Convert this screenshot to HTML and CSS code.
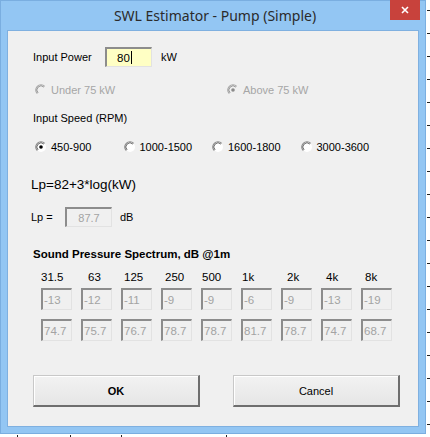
FILE: index.html
```html
<!DOCTYPE html>
<html>
<head>
<meta charset="utf-8">
<link rel="stylesheet" href="styles.css">
</head>
<body>
<svg class="defs" width="0" height="0" aria-hidden="true">
  <defs>
    <symbol id="radio" viewBox="0 0 12 12">
      <circle cx="6" cy="6" r="5" fill="#ffffff"/>
      <path d="M2.3 9.7 A5.2 5.2 0 0 1 9.7 2.3" fill="none" stroke="#8a8a8a" stroke-width="1.2"/>
      <path d="M3.1 8.9 A4.1 4.1 0 0 1 8.9 3.1" fill="none" stroke="#5a5a5a" stroke-width="0.9"/>
    </symbol>
    <symbol id="radio-off" viewBox="0 0 12 12">
      <circle cx="6" cy="6" r="5" fill="#f0f0f0"/>
      <path d="M2.3 9.7 A5.2 5.2 0 0 1 9.7 2.3" fill="none" stroke="#a8a8a8" stroke-width="1.2"/>
      <path d="M3.1 8.9 A4.1 4.1 0 0 1 8.9 3.1" fill="none" stroke="#8a8a8a" stroke-width="0.9"/>
    </symbol>
  </defs>
</svg>
<div class="window">
  <div class="titlebar">
    <span class="tb-side"></span>
    <div class="title">SWL Estimator - Pump (Simple)</div>
    <div class="tb-side tb-right">
      <div class="close">
        <svg width="8" height="8" viewBox="0 0 8 8"><path d="M1 1 L7 7 M7 1 L1 7" stroke="#ffffff" stroke-width="1.6"/></svg>
      </div>
    </div>
  </div>
  <div class="client">
    <div class="row power">
      <span class="power-label">Input Power</span>
      <div class="box box-yellow"><span>80</span><i class="caret"></i></div>
      <span class="unit">kW</span>
    </div>

    <div class="row sizes">
      <div class="opt opt-wide disabled">
        <svg class="radio"><use href="#radio-off"/></svg><span>Under 75 kW</span>
      </div>
      <div class="opt disabled">
        <svg class="radio"><use href="#radio-off"/><circle cx="6" cy="6" r="1.8" fill="#8a8a8a"/></svg><span>Above 75 kW</span>
      </div>
    </div>

    <div class="row caption">Input Speed (RPM)</div>

    <div class="row speeds">
      <div class="opt">
        <svg class="radio"><use href="#radio"/><circle cx="6" cy="6" r="1.8" fill="#000000"/></svg><span>450-900</span>
      </div>
      <div class="opt">
        <svg class="radio"><use href="#radio"/></svg><span>1000-1500</span>
      </div>
      <div class="opt">
        <svg class="radio"><use href="#radio"/></svg><span>1600-1800</span>
      </div>
      <div class="opt">
        <svg class="radio"><use href="#radio"/></svg><span>3000-3600</span>
      </div>
    </div>

    <div class="formula">Lp=82+3*log(kW)</div>

    <div class="row lp">
      <span class="lp-label">Lp =</span>
      <div class="box box-center">87.7</div>
      <span class="unit unit-db">dB</span>
    </div>

    <div class="heading">Sound Pressure Spectrum, dB @1m</div>

    <div class="spectrum">
      <span class="freq">31.5</span>
      <span class="freq">63</span>
      <span class="freq">125</span>
      <span class="freq">250</span>
      <span class="freq">500</span>
      <span class="freq">1k</span>
      <span class="freq">2k</span>
      <span class="freq">4k</span>
      <span class="freq">8k</span>

      <div class="box sbox">-13</div>
      <div class="box sbox">-12</div>
      <div class="box sbox">-11</div>
      <div class="box sbox">-9</div>
      <div class="box sbox">-9</div>
      <div class="box sbox">-6</div>
      <div class="box sbox">-9</div>
      <div class="box sbox">-13</div>
      <div class="box sbox">-19</div>

      <div class="box sbox lower">74.7</div>
      <div class="box sbox lower">75.7</div>
      <div class="box sbox lower">76.7</div>
      <div class="box sbox lower">78.7</div>
      <div class="box sbox lower">78.7</div>
      <div class="box sbox lower">81.7</div>
      <div class="box sbox lower">78.7</div>
      <div class="box sbox lower">74.7</div>
      <div class="box sbox lower">68.7</div>
    </div>

    <div class="buttons">
      <button class="btn btn-default">OK</button>
      <button class="btn">Cancel</button>
    </div>
  </div>
</div>
</body>
</html>
```

FILE: styles.css
```css
html, body {
  margin: 0;
  padding: 0;
}

html {
  background-color: #ffffff;
  background-image:
    repeating-linear-gradient(to bottom, transparent 0 10px, #222222 10px 11px, transparent 11px 23px),
    linear-gradient(to right, transparent 0 17px, #222222 17px 18px, transparent 18px 70px, #222222 70px 71px, transparent 71px 121px, #222222 121px 122px, transparent 122px 226px, #222222 226px 227px, transparent 227px);
  background-size: 3px 100%, 100% 2px;
  background-position: right top, left bottom;
  background-repeat: no-repeat;
}

body {
  width: 430px;
  height: 437px;
  overflow: hidden;
  font-family: "Liberation Sans", Arial, sans-serif;
  font-size: 11px;
  color: #000000;
}

.defs {
  position: absolute;
  width: 0;
  height: 0;
}

.window {
  box-sizing: border-box;
  width: 426px;
  height: 434px;
  background: #93c6f3;
  border: 1px solid #7aaee0;
  display: flex;
  flex-direction: column;
}

.titlebar {
  height: 30px;
  display: grid;
  grid-template-columns: 1fr auto 1fr;
  align-items: start;
}

.title {
  font-family: "Noto Sans", "Open Sans", sans-serif;
  font-size: 14px;
  line-height: 30px;
  color: #2b2b2b;
  padding-left: 4px;
}

.tb-right {
  display: flex;
  justify-content: flex-end;
}

.close {
  width: 30px;
  height: 20px;
  margin-top: -1px;
  margin-right: 5px;
  background: #c8423c;
  display: flex;
  align-items: center;
  justify-content: center;
}

.close svg {
  display: block;
}

.client {
  box-sizing: border-box;
  width: 410px;
  height: 395px;
  margin-left: 7px;
  background: #f0f0f0;
  box-shadow: 0 0 0 1px #7fb0e0;
  padding: 16px 0 0 25px;
  display: flex;
  flex-direction: column;
}

.row {
  display: flex;
  align-items: center;
}

.power {
  height: 20px;
}

.power-label {
  width: 72px;
}

.box {
  box-sizing: border-box;
  border-style: solid;
  border-width: 2px 1px 1px 2px;
  border-color: #8c8c8c #e2e2e2 #e2e2e2 #8c8c8c;
  background: #f0f0f0;
  color: #a3a3a3;
  display: flex;
  align-items: center;
}

.box-yellow {
  width: 47px;
  height: 20px;
  background: #ffffc4;
  color: #000000;
  padding-left: 10px;
  font-size: 11.5px;
}

.caret {
  display: block;
  width: 1px;
  height: 13px;
  background: #000000;
  margin-left: 1px;
}

.unit {
  margin-left: 9px;
}

.sizes {
  margin-top: 16px;
  height: 14px;
  padding-left: 2px;
}

.opt {
  display: flex;
  align-items: center;
  width: 88.5px;
  white-space: nowrap;
}

.opt-wide {
  width: 192px;
}

.disabled {
  color: #a6a6a6;
}

.radio {
  width: 12px;
  height: 12px;
  margin-right: 4px;
  flex: none;
}

.caption {
  margin-top: 14px;
  height: 14px;
}

.speeds {
  margin-top: 15px;
  height: 14px;
  padding-left: 2px;
}

.formula {
  margin-top: 22px;
  margin-left: -2px;
  height: 18px;
  line-height: 18px;
  font-size: 13.5px;
}

.lp {
  margin-top: 13px;
  margin-left: -2px;
  height: 20px;
}

.lp-label {
  width: 34px;
}

.box-center {
  width: 47px;
  height: 20px;
  justify-content: center;
  font-size: 11px;
}

.unit-db {
  margin-left: 8px;
}

.heading {
  margin-top: 20px;
  height: 14px;
  line-height: 14px;
  font-weight: bold;
  font-size: 11.5px;
}

.spectrum {
  margin-top: 9px;
  margin-left: 8px;
  display: grid;
  grid-template-columns: repeat(9, 31px);
  column-gap: 9px;
}

.freq {
  height: 18px;
  line-height: 14px;
  font-size: 11.5px;
  white-space: nowrap;
}

.freq:nth-child(2) { padding-left: 7px; }
.freq:nth-child(3) { padding-left: 3px; }
.freq:nth-child(4) { padding-left: 4px; }
.freq:nth-child(5) { padding-left: 1px; }
.freq:nth-child(6) { padding-left: 1px; }
.freq:nth-child(7) { padding-left: 6px; }
.freq:nth-child(8) { padding-left: 5px; }
.freq:nth-child(9) { padding-left: 4px; }

.sbox {
  width: 31px;
  height: 22px;
  padding-left: 1px;
  font-size: 11.5px;
}

.lower {
  margin-top: 9px;
}

.buttons {
  margin-top: 34px;
  display: flex;
  gap: 33px;
}

.btn {
  box-sizing: border-box;
  width: 167px;
  height: 32px;
  font-family: "Liberation Sans", Arial, sans-serif;
  font-size: 11px;
  color: #000000;
  background: linear-gradient(#f2f2f2, #e6e6e6);
  border-style: solid;
  border-width: 1px 2px 2px 1px;
  border-color: #c8c8c8 #6e6e6e #6e6e6e #c8c8c8;
  box-shadow: inset 1px 1px 0 #ffffff;
  padding: 0;
}

.btn-default {
  font-weight: bold;
}
```
